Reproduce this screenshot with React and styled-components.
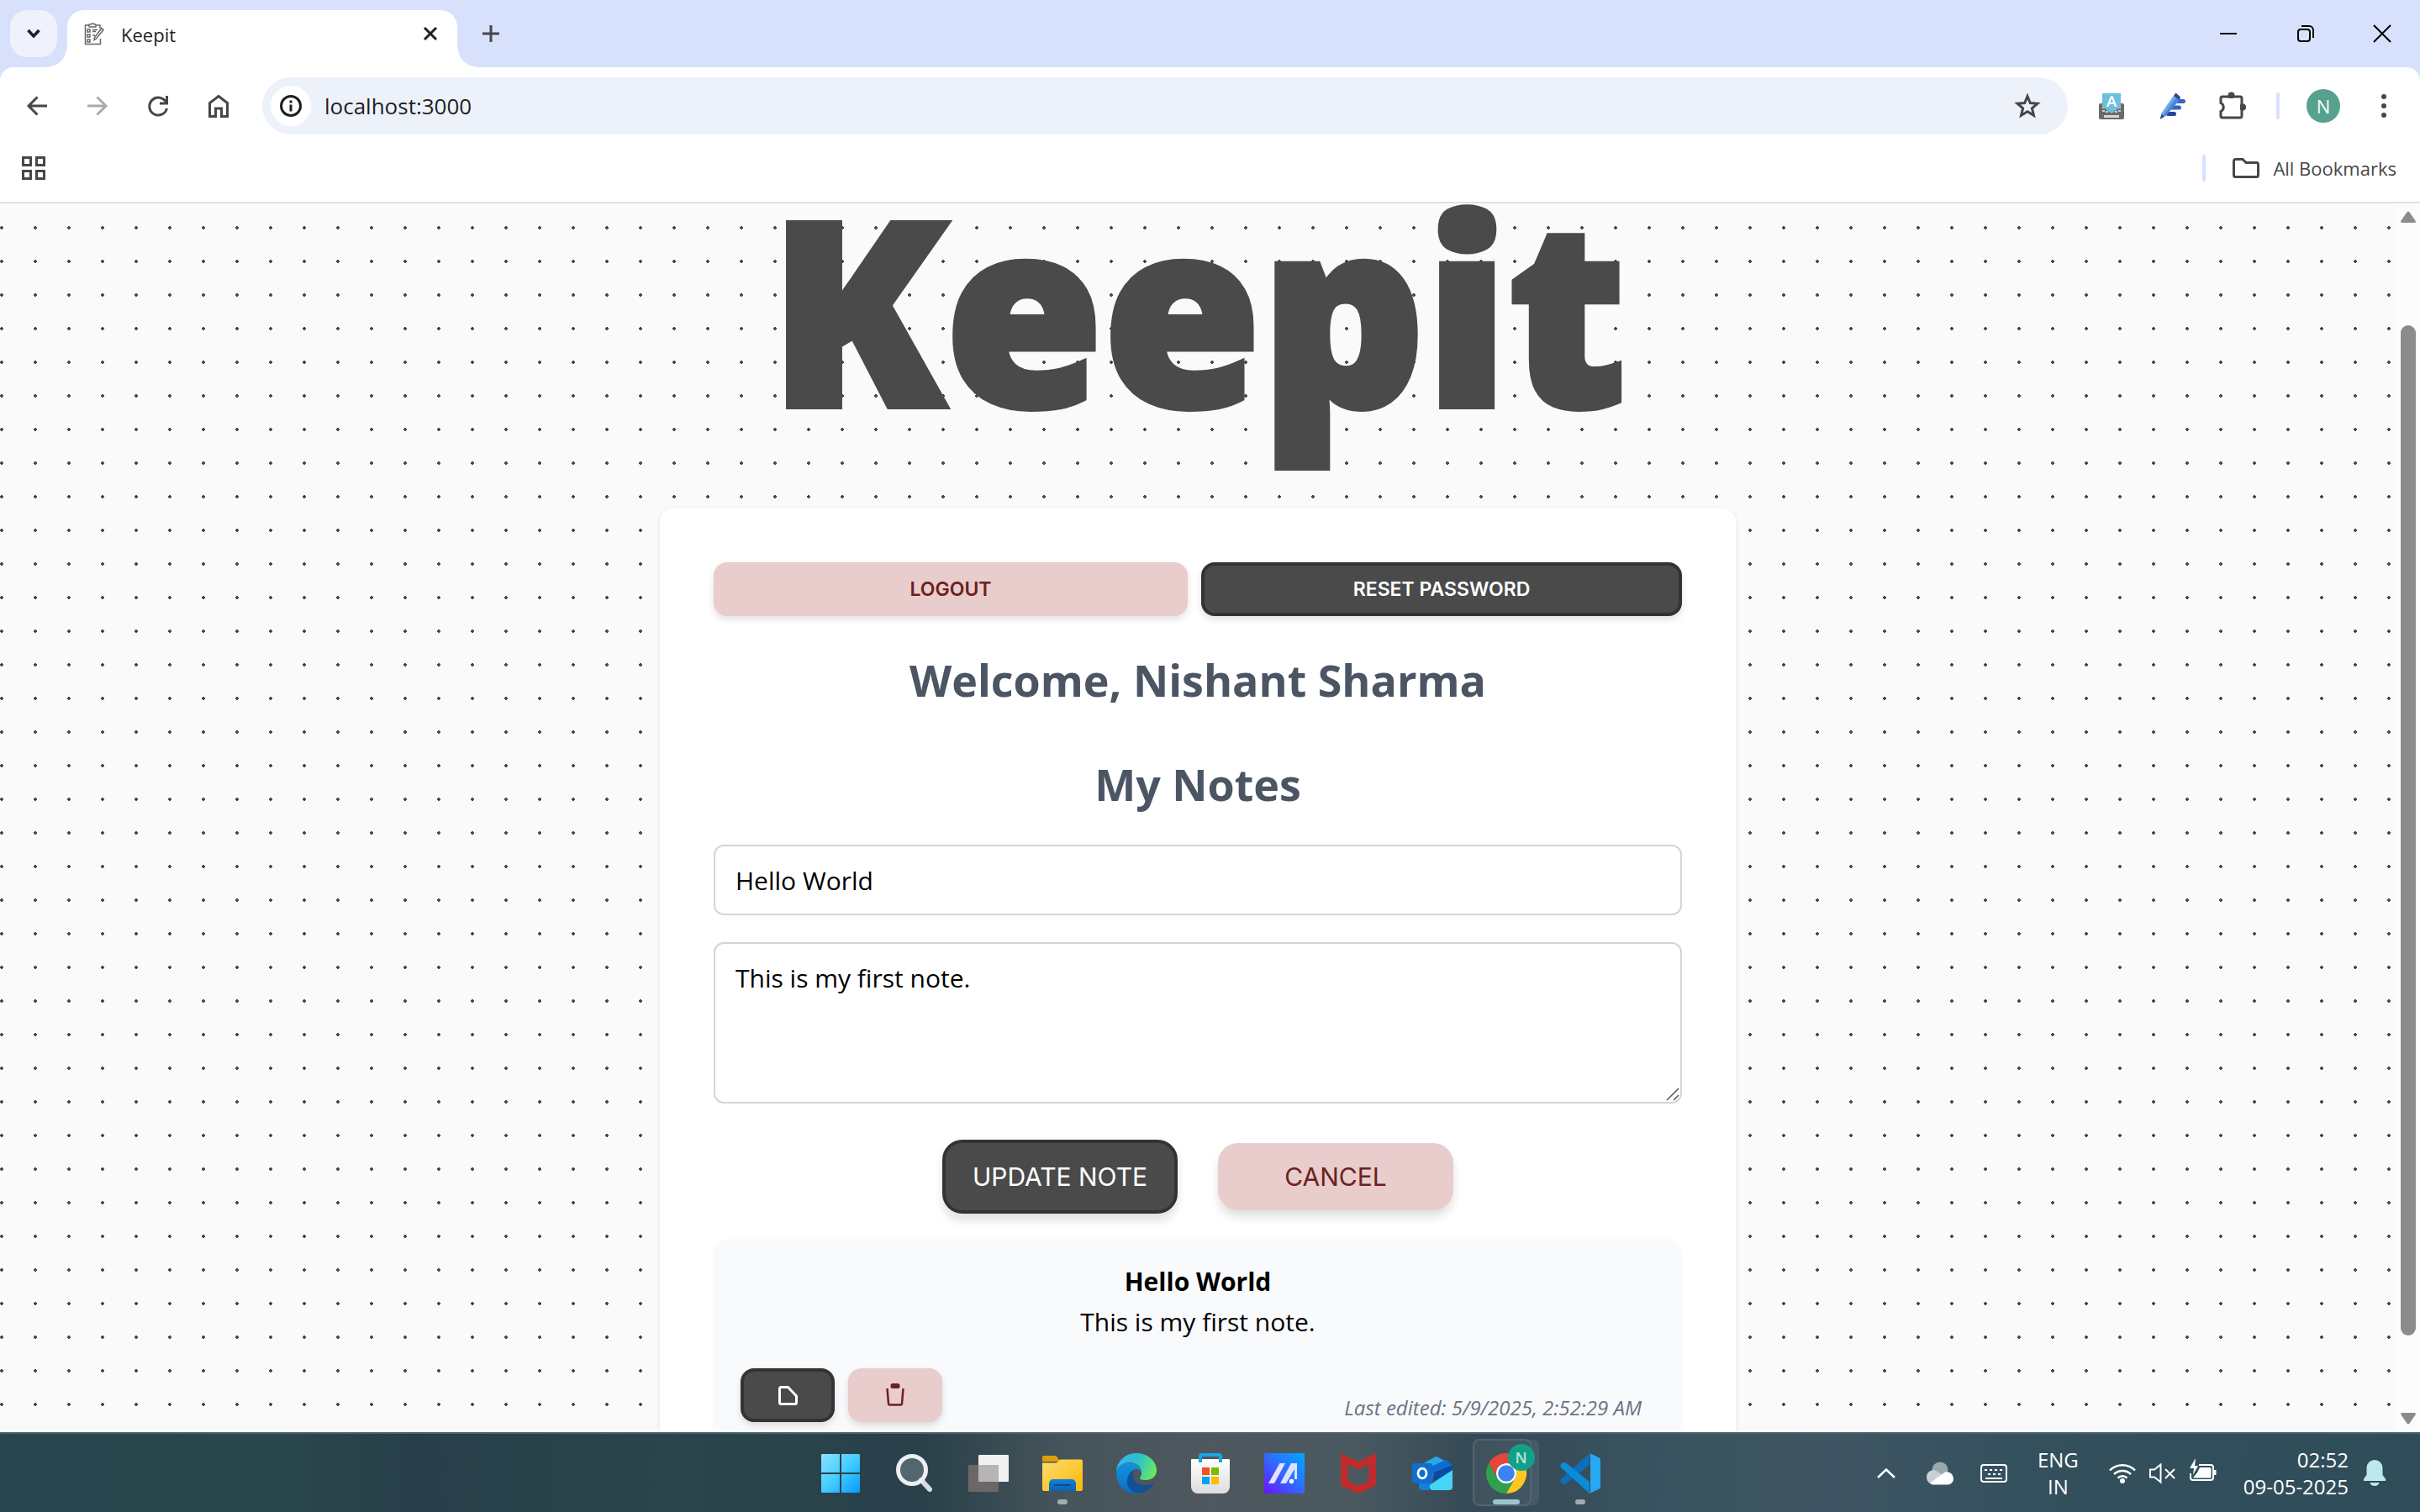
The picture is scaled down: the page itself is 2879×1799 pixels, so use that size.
import React from "react";
import styled, { createGlobalStyle, css } from "styled-components";

const ui = `"Open Sans", "Noto Sans", sans-serif`;
const action = `Inter, "Open Sans", sans-serif`;

const GlobalStyle = createGlobalStyle`
  *, *::before, *::after { box-sizing: border-box; }
  body { margin: 0; font-family: ${ui}; }
  button, input, textarea { font: inherit; color: inherit; margin: 0; }
  button { border: 0; background: none; padding: 0; cursor: pointer; }
  svg { display: block; overflow: visible; }
`;

const Screen = styled.div`
  display: flex;
  flex-direction: column;
  height: 100vh;
  overflow: hidden;
  background: #d8e1fb;
  color: #1f1f1f;
`;

/* ---------- browser chrome ---------- */

const TabStrip = styled.header`
  display: flex;
  align-items: center;
  height: 80px;
  padding-left: 12px;
`;

const TabSearch = styled.button`
  display: grid;
  place-items: center;
  width: 56px;
  height: 56px;
  border-radius: 20px;
  background: #edf2fd;
`;

const Tab = styled.div`
  position: relative;
  display: flex;
  align-items: center;
  align-self: flex-end;
  width: 464px;
  height: 68px;
  margin: 0 12px;
  padding: 0 24px 12px 20px;
  border-radius: 20px 20px 0 0;
  background: #fff;

  &::before,
  &::after {
    content: "";
    position: absolute;
    bottom: 0;
    width: 24px;
    height: 24px;
  }
  &::before {
    right: 100%;
    background: radial-gradient(circle at 0 0, transparent 23px, #fff 24px);
  }
  &::after {
    left: 100%;
    background: radial-gradient(circle at 100% 0, transparent 23px, #fff 24px);
  }
`;

const TabTitle = styled.span`
  flex: 1;
  margin-left: 20px;
  padding-top: 2px;
  font-size: 22px;
  line-height: 32px;
`;

const IconButton = styled.button`
  display: grid;
  place-items: center;
  flex: none;
  width: ${(p) => p.$w || 56}px;
  height: ${(p) => p.$h || 56}px;
  border-radius: 28px;
  color: ${(p) => p.$color || "#474747"};
`;

const WindowControls = styled.div`
  display: flex;
  margin-left: auto;
`;

const Toolbar = styled.div`
  display: flex;
  align-items: center;
  gap: 16px;
  height: 92px;
  padding: 0 15px 0 16px;
  border-radius: 16px 16px 0 0;
  background: #fff;
`;

const Omnibox = styled.form`
  display: flex;
  align-items: center;
  flex: 1;
  height: 68px;
  margin: 0 8px;
  padding: 0 24px 0 10px;
  border-radius: 34px;
  background: #edf2fa;
`;

const SiteInfo = styled.button`
  display: grid;
  place-items: center;
  width: 48px;
  height: 48px;
  border-radius: 50%;
  background: #fff;
`;

const Address = styled.input`
  flex: 1;
  min-width: 0;
  padding: 0 16px;
  border: 0;
  outline: 0;
  background: none;
  font-size: 26px;
  line-height: 40px;
`;

const Divider = styled.span`
  width: 4px;
  height: 32px;
  margin: 0 ${(p) => p.$m}px;
  border-radius: 2px;
  background: #d8e1fb;
`;

const Avatar = styled.button`
  width: 40px;
  height: 40px;
  margin: 0 8px 0 8px;
  border-radius: 50%;
  background: #57a18f;
  color: #fff;
  font-size: 22px;
  line-height: 40px;
`;

const BookmarkBar = styled.nav`
  display: flex;
  align-items: center;
  height: 70px;
  padding: 0 28px 12px 12px;
  border-bottom: 2px solid #e1e1e1;
  background: #fff;
`;

const BookmarkFolder = styled.button`
  display: flex;
  align-items: center;
  gap: 16px;
  color: #474747;
  font-size: 22px;
  line-height: 32px;
`;

const Spacer = styled.span`
  flex: 1;
`;

/* ---------- page ---------- */

const Viewport = styled.div`
  display: flex;
  flex: 1;
  min-height: 0;
`;

const Page = styled.main`
  flex: 1;
  min-width: 0;
  background-color: #fafafa;
  background-image: radial-gradient(circle at 2px 2px, #4a4a4a 2px, transparent 2px);
  background-size: 40px 40px;
  background-position: 0 27px;
`;

const Wordmark = styled.h1`
  margin: 0 0 117px;
  color: #4a4a4a;
  font-size: 304px;
  font-weight: 900;
  line-height: 246px;
  text-align: center;
  -webkit-text-stroke: 8px #4a4a4a;
`;

const Card = styled.section`
  width: 1280px;
  max-width: 100%;
  margin: 0 auto;
  padding: 64px;
  border-radius: 16px;
  background: #fff;
  box-shadow: 0 2px 6px rgba(0, 0, 0, 0.1);
`;

const tones = {
  dark: css`
    border: 4px solid #333;
    background: #4a4a4a;
    color: #fff;
  `,
  rose: css`
    background: #e9cccc;
    color: #6b211e;
  `,
};

const Button = styled.button`
  display: grid;
  place-items: center;
  height: 64px;
  border-radius: 16px;
  box-shadow: 0 4px 8px rgba(0, 0, 0, 0.12);
  font-family: ${action};
  font-size: 23px;
  font-weight: 600;
  ${(p) => tones[p.$tone]}
`;

const AccountButton = styled(Button)`
  flex: 1 1 auto;
  width: ${(p) => (p.$tone === "dark" ? 572 : 564)}px;
`;

const FormButton = styled(Button)`
  width: 280px;
  height: ${(p) => (p.$tone === "dark" ? 88 : 80)}px;
  border-radius: 24px;
  box-shadow: 0 8px 12px rgba(0, 0, 0, 0.12);
  font-size: 30px;
  font-weight: 400;
`;

const NoteButton = styled(Button)`
  width: 112px;
`;

const ButtonRow = styled.div`
  display: flex;
  align-items: center;
  justify-content: center;
  gap: ${(p) => p.$gap}px;
`;

const Heading = styled.h2`
  margin: ${(p) => p.$margin};
  color: #4b5563;
  font-size: 52px;
  font-weight: 700;
  line-height: 72px;
  text-align: center;
`;

const field = css`
  display: block;
  width: 100%;
  border: 2px solid #d1d5db;
  border-radius: 12px;
  outline: 0;
  background: #fff;
  color: #000;
  font-size: 30px;
  line-height: 48px;
`;

const TitleInput = styled.input`
  ${field}
  height: 84px;
  padding: 0 24px;
`;

const BodyWrap = styled.div`
  position: relative;
  margin: 32px 0 43px;
`;

const BodyInput = styled.textarea`
  ${field}
  height: 192px;
  padding: 17px 24px;
  resize: none;
`;

const Grip = styled.svg`
  position: absolute;
  right: 4px;
  bottom: 4px;
`;

const Note = styled.article`
  margin-top: 31px;
  padding: 26px 32px 32px;
  border-radius: 16px;
  background: #f9fafc;
  box-shadow: 0 0 4px rgba(0, 0, 0, 0.03);
  color: #000;
  font-size: 30px;
  line-height: 48px;
  text-align: center;
`;

const NoteTitle = styled.h3`
  margin: 0;
  font-size: inherit;
  font-weight: 700;
`;

const NoteText = styled.p`
  margin: 0 0 31px;
`;

const NoteFooter = styled.footer`
  display: flex;
  align-items: flex-end;
  justify-content: space-between;
  padding-right: 16px;
`;

const Edited = styled.small`
  color: #6b7280;
  font-size: 24px;
  font-style: italic;
  line-height: 34px;
`;

const Scrollbar = styled.aside`
  display: flex;
  flex-direction: column;
  width: 29px;
  padding: 9px 5px 9px 6px;
  background: #fcfcfc;
`;

const Track = styled.div`
  display: flex;
  flex: 1;
  padding: 122px 0 92px;
`;

const Thumb = styled.div`
  flex: 1;
  border-radius: 9px;
  background: #8b8b8b;
`;

/* ---------- taskbar ---------- */

const Taskbar = styled.footer`
  position: relative;
  z-index: 1;
  display: grid;
  grid-template-columns: 1fr auto 1fr;
  flex: none;
  height: 95px;
  border-top: 2px solid #4f636b;
  background: linear-gradient(
    90deg,
    #27464e 0%, #29474c 12%, #283f49 17%, #2a454c 28%, #29404a 38%, #46545b 44%,
    #4e585e 50%, #4a5960 56%, #344955 61%, #3a525f 68%, #3f5563 76%, #34505d 84%, #2f4c59 100%
  );
  color: #fff;
`;

const Apps = styled.div`
  display: flex;
  grid-column: 2;
`;

const AppButton = styled.button`
  position: relative;
  display: grid;
  place-items: center;
  width: 88px;
`;

const ActivePlate = styled.span`
  position: absolute;
  top: 6px;
  left: 4px;
  width: 70px;
  height: 80px;
  border: 2px solid rgba(255, 255, 255, 0.1);
  border-radius: 8px;
  background: rgba(255, 255, 255, 0.06);
  box-shadow: 10px 0 0 -1px rgba(255, 255, 255, 0.08);
`;

const Indicator = styled.span`
  position: absolute;
  bottom: 9px;
  left: 50%;
  width: ${(p) => (p.$active ? 32 : 12)}px;
  height: 6px;
  margin-left: ${(p) => (p.$active ? -16 : -6)}px;
  border-radius: 3px;
  background: ${(p) => (p.$active ? "#9ac5ce" : "#a3abae")};
`;

const ProfileBadge = styled.span`
  position: absolute;
  top: 12px;
  left: 46px;
  width: 32px;
  height: 32px;
  border-radius: 50%;
  background: #12a08a;
  color: #b9e6df;
  font-size: 18px;
  font-weight: 600;
  line-height: 32px;
`;

const Tray = styled.div`
  display: flex;
  align-items: center;
  justify-self: end;
  padding-right: 40px;
`;

const TrayButton = styled.button`
  display: flex;
  align-items: center;
  gap: 16px;
  margin-right: ${(p) => p.$after || 0}px;
  font-size: 24px;
  line-height: 32px;
  text-align: ${(p) => p.$align || "center"};
`;

/* ---------- icons ---------- */

const Line = ({ w, h, sw = 3, children, ...rest }) => (
  <svg width={w} height={h} viewBox={`0 0 ${w} ${h}`} fill="none" stroke="currentColor" strokeWidth={sw} {...rest}>
    {children}
  </svg>
);

const Favicon = () => (
  <Line w={24} h={28} sw={1.5} stroke="#666">
    <path d="M6 4H1.500V26.500H19.500V20M15 4H19V8M6 6V3H8.500A2 2 0 0 1 12 3H14V6Z" strokeLinejoin="round" />
    <path d="M4 9h3v3H4zM4 15h3v3H4zM4 21h3v3H4zM10 9.500h6M10 11.500h4M10 16h3M21 7.500l2 2L14.500 20l-2.500 1.500.5-3z" />
  </Line>
);

const KeyboardExt = () => (
  <svg width="30" height="32" viewBox="0 0 30 32">
    <rect y="13" width="30" height="19" rx="2" fill="#6b6b6b" />
    <path d="M4 18h3M4 22h3M23 18h3M23 22h3M8 23h3M19 23h3" stroke="#ccc" strokeWidth="2" />
    <rect x="6" y="27" width="18" height="3" fill="#d8d8d8" />
    <path d="M4 1h22v16l-11 8-11-8z" fill="#6cbfdd" />
    <text x="15" y="17" fill="#fff" fontSize="19" fontWeight="500" fontFamily="Roboto, sans-serif" textAnchor="middle">A</text>
  </svg>
);

const PenExt = () => (
  <svg width="31" height="32" viewBox="0 0 31 32">
    <rect x="16" y="8" width="15" height="5" rx="2.500" fill="#3b62c4" />
    <rect x="12" y="15.500" width="14" height="5" rx="2.500" fill="#3b62c4" />
    <rect x="8" y="23" width="12" height="5" rx="2.500" fill="#274592" />
    <path d="M17 4l7 5L7.500 28 2 30.500 2.500 25z" fill="#4a84dc" />
    <path d="M17 4l3 2L5 27l-2.500-2z" fill="#6fa6ee" />
    <path d="M17 4l2.500-3.500 5.500 5L23.500 9z" fill="#274592" />
    <path d="M2.500 26L.5 32l5-3z" fill="#24408a" />
  </svg>
);

const Puzzle = () => (
  <svg width="32" height="34" viewBox="0 0 32 34" fill="none">
    <path d="M3.500 6H25a2 2 0 0 1 2 2V29a2 2 0 0 1-2 2H4a2 2 0 0 1-2-2V23.500a5.500 5.500 0 0 0 0-10V8a2 2 0 0 1 1.500-2z" stroke="#474747" strokeWidth="3" />
    <circle cx="14.500" cy="4.500" r="4" fill="#474747" />
    <circle cx="28" cy="18.500" r="4" fill="#474747" />
    <path d="M4 8h21v21H4v-4.500a6 6 0 0 0 0-12z" fill="#fff" />
  </svg>
);

const Windows = () => (
  <svg width="46" height="46" viewBox="0 0 46 46">
    <defs>
      <linearGradient id="win" x1="0" y1="0" x2="46" y2="46" gradientUnits="userSpaceOnUse">
        <stop stopColor="#8ae2ff" /><stop offset=".5" stopColor="#43cdff" /><stop offset="1" stopColor="#0a98ff" />
      </linearGradient>
    </defs>
    <path fill="url(#win)" d="M1 0H22V22H0V1zM24 0H45L46 1V22H24zM0 24H22V46H1L0 45zM24 24H46V45L45 46H24z" />
  </svg>
);

const Search = () => (
  <svg width="44" height="46" viewBox="0 0 44 46" fill="none">
    <path d="M30 31L40 42" stroke="#d8dbe2" strokeWidth="6" strokeLinecap="round" />
    <circle cx="19" cy="19" r="16.500" fill="#fff" fillOpacity=".2" stroke="#eceef1" strokeWidth="5" />
  </svg>
);

const TaskView = () => (
  <svg width="48" height="44" viewBox="0 0 48 44">
    <rect x="12" y="0" width="36" height="32" rx="1" fill="#f1f1f2" />
    <rect x="0" y="12" width="36" height="32" rx="1" fill="#6c6767" />
    <path d="M12 12h24v20H12z" fill="#b5b5b5" />
  </svg>
);

const Explorer = () => (
  <svg width="48" height="44" viewBox="0 0 48 44">
    <defs>
      <linearGradient id="fold" x1="0" y1="0" x2="1" y2="1"><stop stopColor="#ffdd6e" /><stop offset="1" stopColor="#f8b708" /></linearGradient>
      <linearGradient id="foldb" x1="0" y1="0" x2="0" y2="1"><stop stopColor="#1182d6" /><stop offset="1" stopColor="#0c62b5" /></linearGradient>
    </defs>
    <path d="M0 3a2 2 0 0 1 2-2H15q2 0 3 2l3 5H0z" fill="#dd9e08" />
    <path d="M0 9.500H16q2 0 3-2t3-2H46a2 2 0 0 1 2 2V41a2 2 0 0 1-2 2H2a2 2 0 0 1-2-2z" fill="url(#fold)" />
    <path d="M8 43V34a5 5 0 0 1 5-5H35a5 5 0 0 1 5 5V43z" fill="url(#foldb)" />
    <path d="M15 36H33" stroke="#0a4c93" strokeWidth="2" strokeLinecap="round" />
  </svg>
);

const Edge = () => (
  <svg width="48" height="48" viewBox="0 0 48 48">
    <defs>
      <linearGradient id="edgeA" x1="0" y1=".3" x2="1" y2=".6"><stop stopColor="#36b4f2" /><stop offset=".5" stopColor="#2cc3c9" /><stop offset="1" stopColor="#6bea5c" /></linearGradient>
      <linearGradient id="edgeB" x1="0" y1="0" x2="0" y2="1"><stop stopColor="#1592d8" /><stop offset="1" stopColor="#0670c9" /></linearGradient>
    </defs>
    <path d="M0 22C1 9 11 0 24 0 38 0 48 10 48 20 48 28 42 32 35 32 29.500 32 27 30.500 28.500 28.500 30 27 30 25 30 23 30 16 24 11 15 11 8 11 2 16 0 22z" fill="url(#edgeA)" />
    <path d="M0 24C0 16 7 11.500 15 11.500 23 11.500 30 16 30 23 27 18 23 18 20 20 15 26 17 36 24 42 28 44.500 34 45 37 43.500 33 46.500 29 48 24 48 10 48 0 37 0 24z" fill="url(#edgeB)" />
    <path d="M44.500 36.500C41 43 34 47.500 26 47.500 14 46 10 35 15 26 16.500 23 18.500 20.500 21.500 19.500 18 25 19 31 24 35 30 39.500 38 38.500 43 36 44.200 35.400 44.900 35.800 44.500 36.500z" fill="#12509a" />
  </svg>
);

const Store = () => (
  <svg width="48" height="48" viewBox="0 0 48 48">
    <defs><linearGradient id="bag" x1="0" y1="0" x2="0" y2="1"><stop stopColor="#fff" /><stop offset="1" stopColor="#dcdcdc" /></linearGradient></defs>
    <path d="M1 8a1 1 0 0 1 1-1H46a1 1 0 0 1 1 1V40a8 8 0 0 1-8 8H9a8 8 0 0 1-8-8z" fill="url(#bag)" />
    <path d="M12 11V3.500a1.500 1.500 0 0 1 1.500-1.500H34.500a1.500 1.500 0 0 1 1.500 1.500V11" fill="none" stroke="#18a5ec" strokeWidth="4" />
    <path d="M14 17h9v9h-9z" fill="#f25022" /><path d="M25 17h9v9h-9z" fill="#7fba00" />
    <path d="M14 28h9v9h-9z" fill="#00a4ef" /><path d="M25 28h9v9h-9z" fill="#ffb900" />
  </svg>
);

const Asus = () => (
  <svg width="48" height="48" viewBox="0 0 48 48">
    <defs><linearGradient id="asus" x1="0" y1="1" x2="1" y2="0"><stop stopColor="#6c12ff" /><stop offset=".5" stopColor="#2f6bff" /><stop offset="1" stopColor="#00a8ff" /></linearGradient></defs>
    <path d="M0 0h48v48H0z" fill="url(#asus)" />
    <path d="M18.500 12H25L12 36H5z" fill="#e6e0ff" />
    <path d="M32 12H39V31H36V19L26 36H19z" fill="#d9e2ff" />
    <circle cx="32.500" cy="33.500" r="2.700" fill="#fff" />
  </svg>
);

const McAfee = () => (
  <svg width="48" height="48" viewBox="0 0 48 48">
    <path fillRule="evenodd" fill="#bf2c2b" d="M3 0L24 10 45 0V38.500L24 48 3 38.500zM11.700 13.500V33L24 38.500 36.300 33V13.500L24 19.500z" />
  </svg>
);

const Outlook = () => (
  <svg width="48" height="48" viewBox="0 0 48 48">
    <path d="M12 13L27 4.500q1.500-.8 3 0L48 14 30 28z" fill="#28a8ea" />
    <path d="M22 24V16L40 8 48 14 28 28z" fill="#0f6cd0" />
    <path d="M24 24L48 14V22L28 34z" fill="#0b4aa0" />
    <path d="M8 24H26L20 44H12a4 4 0 0 1-4-4z" fill="#1580d8" />
    <path d="M48 20V40a4 4 0 0 1-4 4H24a4 4 0 0 1-2-7z" fill="#45d5f7" />
    <rect y="12" width="24" height="24" rx="2" fill="#0f6fd0" />
    <ellipse cx="12" cy="24" rx="5" ry="5.800" fill="none" stroke="#fff" strokeWidth="2.800" />
  </svg>
);

const Chrome = () => (
  <svg width="48" height="48" viewBox="0 0 48 48">
    <path fill="#e33b2e" d="M24 12H44.800A24 24 0 0 0 3.200 12L13.600 30A12 12 0 0 1 24 12z" />
    <path fill="#249a43" d="M13.600 30L3.200 12A24 24 0 0 0 24 48L34.400 30A12 12 0 0 1 13.600 30z" />
    <path fill="#fcc316" d="M34.400 30L24 48A24 24 0 0 0 44.800 12H24A12 12 0 0 1 34.400 30z" />
    <circle cx="24" cy="24" r="12" fill="#fff" /><circle cx="24" cy="24" r="9.800" fill="#2f7cf0" />
  </svg>
);

const VSCode = () => (
  <svg width="48" height="48" viewBox="0 0 48 48">
    <path fill="#0b6fb8" d="M35 0L1 31Q-.5 33.500 1.500 35.500L4 37q1.500.5 3-.5L35 14z" />
    <path fill="#0c8bd9" d="M35 48L1 17Q-.5 14.500 1.500 12.500L4 11q1.500-.5 3 .5L35 34z" />
    <path fill="#27a8f3" d="M35 0L46.500 5.500Q48 6.300 48 8V40q0 1.700-1.500 2.500L35 48q1-1 1-3V3q0-2-1-3z" />
  </svg>
);

const apps = [
  { name: "Start", icon: <Windows /> },
  { name: "Search", icon: <Search /> },
  { name: "Task View", icon: <TaskView /> },
  { name: "File Explorer", icon: <Explorer />, open: true },
  { name: "Microsoft Edge", icon: <Edge /> },
  { name: "Microsoft Store", icon: <Store /> },
  { name: "MyASUS", icon: <Asus /> },
  { name: "McAfee", icon: <McAfee /> },
  { name: "Outlook", icon: <Outlook /> },
  { name: "Google Chrome", icon: <Chrome />, open: true, active: true },
  { name: "Visual Studio Code", icon: <VSCode />, open: true },
];

function BrowserChrome() {
  return (
    <>
      <TabStrip>
        <TabSearch aria-label="Search tabs">
          <Line w={16} h={12} sw={3.5}><path d="M1.500 2L8 9 14.500 2" /></Line>
        </TabSearch>
        <Tab>
          <Favicon />
          <TabTitle>Keepit</TabTitle>
          <IconButton $w={16} $h={32} $color="#1f1f1f" aria-label="Close tab">
            <Line w={16} h={16}><path d="M1 1L15 15M15 1L1 15" /></Line>
          </IconButton>
        </Tab>
        <IconButton aria-label="New tab">
          <Line w={20} h={20}><path d="M10 0V20M0 10H20" /></Line>
        </IconButton>
        <WindowControls>
          <IconButton $w={92} $h={80} $color="#000" aria-label="Minimize">
            <Line w={20} h={20} sw={2}><path d="M0 10H20" /></Line>
          </IconButton>
          <IconButton $w={92} $h={80} $color="#000" aria-label="Restore">
            <Line w={20} h={20} sw={2}>
              <rect x="1" y="5" width="14" height="14" rx="3" /><path d="M5 1H14A5 5 0 0 1 19 6V15" />
            </Line>
          </IconButton>
          <IconButton $w={90} $h={80} $color="#000" aria-label="Close">
            <Line w={20} h={20} sw={2}><path d="M0 0L20 20M20 0L0 20" /></Line>
          </IconButton>
        </WindowControls>
      </TabStrip>
      <Toolbar>
        <IconButton aria-label="Back"><Line w={24} h={24}><path d="M24 12H2.500M12.500 1.500L2 12 12.500 22.500" /></Line></IconButton>
        <IconButton $color="#ababab" aria-label="Forward"><Line w={24} h={24}><path d="M0 12H21.500M11.500 1.500L22 12 11.500 22.500" /></Line></IconButton>
        <IconButton aria-label="Reload">
          <Line w={24} h={24}><path d="M22.500 15A10.500 10.500 0 1 1 21.500 7.500M22.500 0V9H14" /></Line>
        </IconButton>
        <IconButton aria-label="Home">
          <Line w={24} h={28}><path d="M1.500 26.500V10.500L12 2.500 22.500 10.500V26.500H15.500V17H8.500V26.500z" /></Line>
        </IconButton>
        <Omnibox onSubmit={(e) => e.preventDefault()}>
          <SiteInfo type="button" aria-label="Site information">
            <Line w={26} h={26}><circle cx="13" cy="13" r="11.500" /><path d="M13 11.500V19.500M13 6.500V9.500" /></Line>
          </SiteInfo>
          <Address aria-label="Address" defaultValue="localhost:3000" />
          <IconButton type="button" $w={48} $h={48} aria-label="Bookmark this tab">
            <Line w={30} h={28}>
              <path d="M15 2.500L18.300 10.500 27 11.200 20.400 16.900 22.500 25.300 15 20.800 7.500 25.300 9.600 16.900 3 11.200 11.700 10.500z" />
            </Line>
          </IconButton>
        </Omnibox>
        <IconButton aria-label="Keyboard extension"><KeyboardExt /></IconButton>
        <IconButton aria-label="Writing extension"><PenExt /></IconButton>
        <IconButton aria-label="Extensions"><Puzzle /></IconButton>
        <Divider $m={8} />
        <Avatar aria-label="Profile">N</Avatar>
        <IconButton aria-label="Menu">
          <svg width="6" height="28" viewBox="0 0 6 28" fill="#474747">
            <circle cx="3" cy="3" r="3" /><circle cx="3" cy="14" r="3" /><circle cx="3" cy="25" r="3" />
          </svg>
        </IconButton>
      </Toolbar>
      <BookmarkBar>
        <IconButton aria-label="Apps">
          <Line w={28} h={28}>
            <path d="M1.500 1.500H10.500V10.500H1.500zM17.500 1.500H26.500V10.500H17.500zM1.500 17.500H10.500V26.500H1.500zM17.500 17.500H26.500V26.500H17.500z" />
          </Line>
        </IconButton>
        <Spacer />
        <Divider $m={32} />
        <BookmarkFolder>
          <Line w={32} h={24}><path d="M3.500 1.500H12L16 5.500H28.500a2 2 0 0 1 2 2V20.500a2 2 0 0 1-2 2H3.500a2 2 0 0 1-2-2V3.500a2 2 0 0 1 2-2z" /></Line>
          All Bookmarks
        </BookmarkFolder>
      </BookmarkBar>
    </>
  );
}

function NotesPage() {
  return (
    <Page>
      <Wordmark>Keepit</Wordmark>
      <Card>
        <ButtonRow $gap={16}>
          <AccountButton $tone="rose">LOGOUT</AccountButton>
          <AccountButton $tone="dark">RESET PASSWORD</AccountButton>
        </ButtonRow>
        <Heading $margin="40px 0 52px">Welcome, Nishant Sharma</Heading>
        <Heading $margin="0 0 36px">My Notes</Heading>
        <TitleInput aria-label="Note title" defaultValue="Hello World" />
        <BodyWrap>
          <BodyInput aria-label="Note text" defaultValue="This is my first note." />
          <Grip width="14" height="14" viewBox="0 0 14 14" stroke="#555" strokeWidth="1.500">
            <path d="M0 14L14 0M8 14L14 8" />
          </Grip>
        </BodyWrap>
        <ButtonRow $gap={48}>
          <FormButton $tone="dark">UPDATE NOTE</FormButton>
          <FormButton $tone="rose">CANCEL</FormButton>
        </ButtonRow>
        <Note>
          <NoteTitle>Hello World</NoteTitle>
          <NoteText>This is my first note.</NoteText>
          <NoteFooter>
            <ButtonRow $gap={16}>
              <NoteButton $tone="dark" aria-label="Edit note">
                <Line w={23} h={23} strokeLinejoin="round"><path d="M3 1.500H11.500L21.500 12V20a1.500 1.500 0 0 1-1.500 1.500H3A1.500 1.500 0 0 1 1.500 20V3A1.500 1.500 0 0 1 3 1.500z" /></Line>
              </NoteButton>
              <NoteButton $tone="rose" aria-label="Delete note">
                <Line w={22} h={28} sw={2.5}>
                  <path d="M1.500 6L3 24a1.500 1.500 0 0 0 1.500 1.500H17.500A1.500 1.500 0 0 0 19 24L20.500 6" />
                  <rect x="5.500" y="0" width="11" height="6" rx="2.500" fill="currentColor" stroke="none" />
                </Line>
              </NoteButton>
            </ButtonRow>
            <Edited>Last edited: 5/9/2025, 2:52:29 AM</Edited>
          </NoteFooter>
        </Note>
      </Card>
    </Page>
  );
}

function SystemTray() {
  return (
    <Tray>
      <TrayButton $after={37} aria-label="Show hidden icons"><Line w={22} h={12} sw={2.5}><path d="M1 11L11 1.500 21 11" /></Line></TrayButton>
      <TrayButton $after={32} aria-label="OneDrive">
        <svg width="32" height="28" viewBox="0 0 32 28">
          <circle cx="16" cy="10" r="9.500" fill="#9aa9b0" />
          <path d="M8 27A8 8 0 0 1 0 19 8 8 0 0 1 14 13L26 19 12 27z" fill="#c9d0d4" />
          <path d="M4 25.500L22 12.500A8 8 0 0 1 32 20 7 7 0 0 1 25 27.500H7z" fill="#fff" />
        </svg>
      </TrayButton>
      <TrayButton $after={36} aria-label="Touch keyboard">
        <Line w={32} h={22} sw={2}>
          <rect x="1" y="1" width="30" height="20" rx="3" />
          <path d="M5 7h3M11 7h3M17 7h3M23 7h3M9 12h3M15 12h3M21 12h3M6 17h20" />
        </Line>
      </TrayButton>
      <TrayButton $after={36}>ENG<br />IN</TrayButton>
      <TrayButton $after={32} aria-label="Network, volume and battery">
        <Line w={32} h={24} sw={2.5}>
          <path d="M1 8.500A21 21 0 0 1 31 8.500M6 13A14.500 14.500 0 0 1 26 13M10.500 17.500A8 8 0 0 1 21.500 17.500" />
          <circle cx="16" cy="21" r="3" fill="#fff" stroke="none" />
        </Line>
        <Line w={32} h={24} sw={2}><path d="M1 7.500H6L13.500 1.500V22.500L6 16.500H1zM19 7L30 18M30 7L19 18" /></Line>
        <Line w={32} h={32} sw={2}>
          <path d="M11 6H25a3 3 0 0 1 3 3V21a3 3 0 0 1-3 3H4a3 3 0 0 1-3-3V16" />
          <path d="M12 9H24a1.500 1.500 0 0 1 1.500 1.500V20a1.500 1.500 0 0 1-1.500 1.500H4L9 15zM28.500 12H31.500V18H28.500zM7-2L0 10H5L4 18 10 7H6z" fill="#fff" stroke="none" />
        </Line>
      </TrayButton>
      <TrayButton $after={17} $align="right">02:52<br />09-05-2025</TrayButton>
      <TrayButton aria-label="Notifications">
        <svg width="28" height="32" viewBox="0 0 28 32" fill="#bde7ea">
          <path d="M14 0A9.500 9.500 0 0 1 23.500 9.500V18L27 22.500V25H1V22.500L4.500 18V9.500A9.500 9.500 0 0 1 14 0zM8.500 27H19.500A5.500 4 0 0 1 8.500 27z" />
        </svg>
      </TrayButton>
    </Tray>
  );
}

export default function App() {
  return (
    <Screen>
      <GlobalStyle />
      <BrowserChrome />
      <Viewport>
        <NotesPage />
        <Scrollbar>
          <svg width="18" height="14" viewBox="0 0 18 14" fill="#8b8b8b"><path d="M7.500 1.500Q9-.5 10.500 1.500L17.500 11.500Q18.500 14 16.500 14H1.500Q-.5 14 .5 11.500z" /></svg>
          <Track><Thumb /></Track>
          <svg width="18" height="14" viewBox="0 0 18 14" fill="#8b8b8b"><path d="M7.500 12.500Q9 14.500 10.500 12.500L17.500 2.500Q18.500 0 16.500 0H1.500Q-.5 0 .5 2.500z" /></svg>
        </Scrollbar>
      </Viewport>
      <Taskbar>
        <Apps>
          {apps.map((a) => (
            <AppButton key={a.name} aria-label={a.name}>
              {a.active && <ActivePlate />}
              {a.icon}
              {a.active && <ProfileBadge>N</ProfileBadge>}
              {a.open && <Indicator $active={a.active} />}
            </AppButton>
          ))}
        </Apps>
        <SystemTray />
      </Taskbar>
    </Screen>
  );
}
